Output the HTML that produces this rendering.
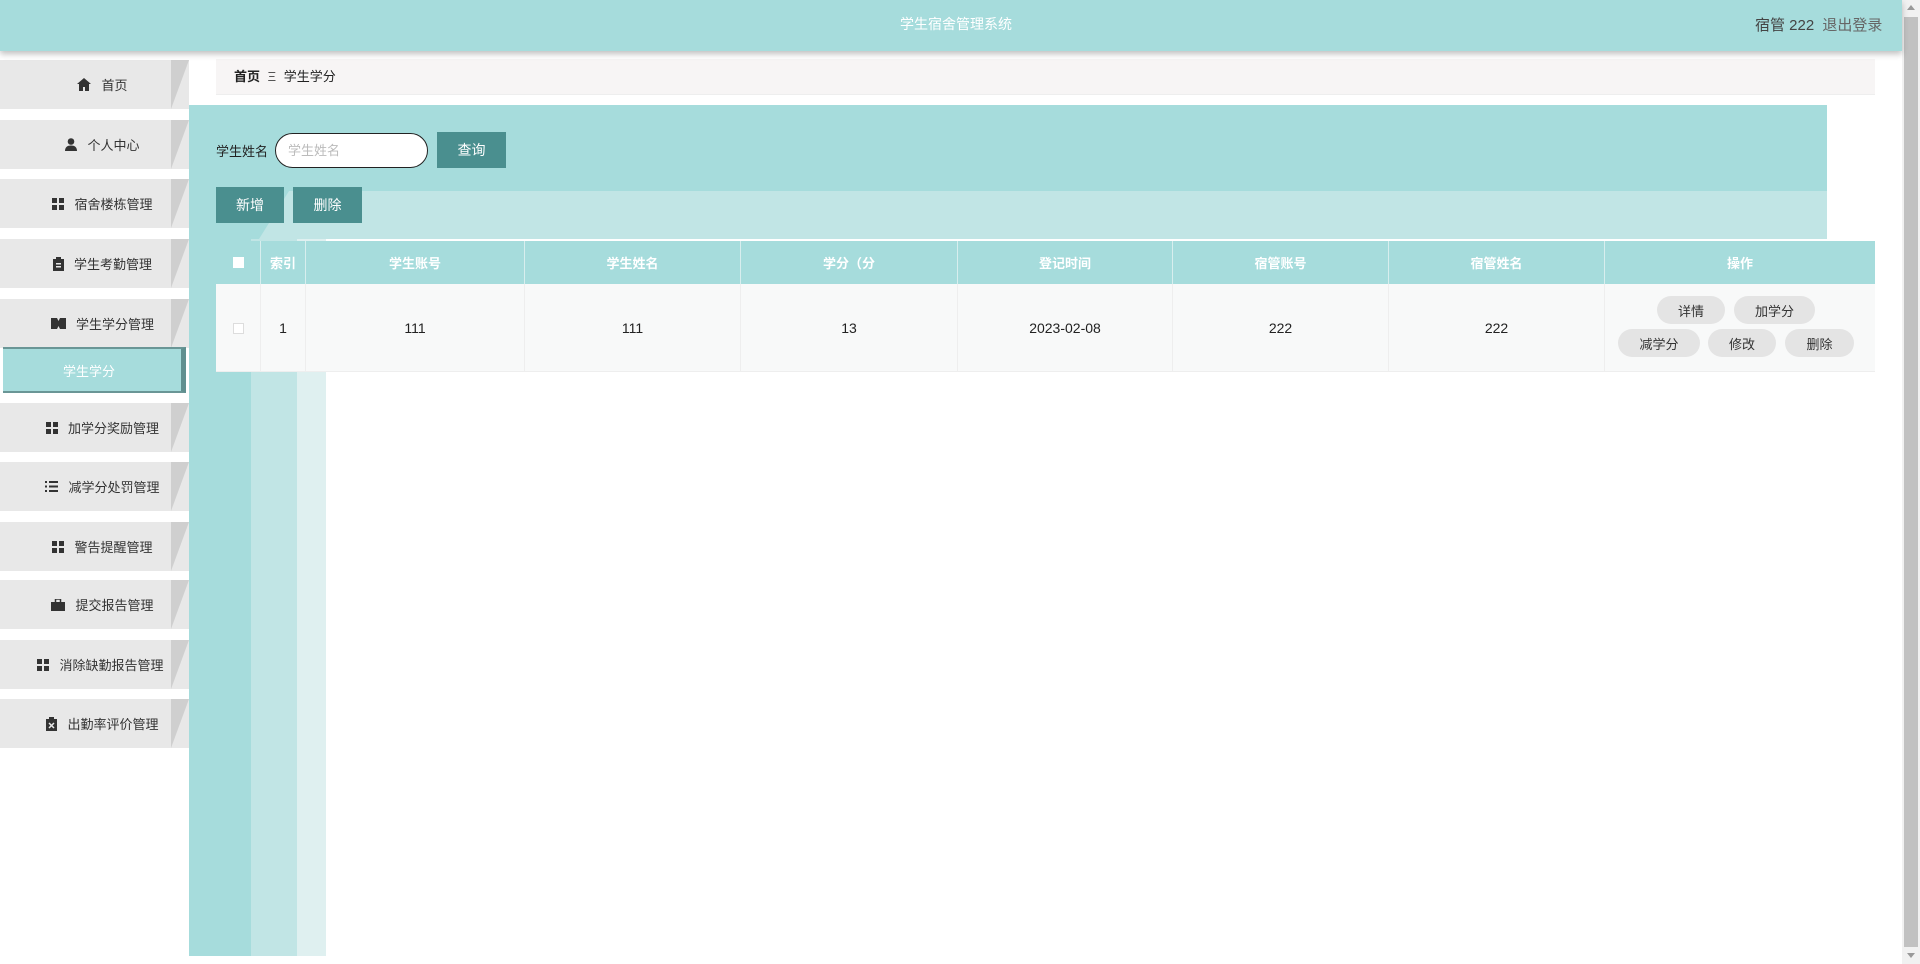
<!DOCTYPE html>
<html><head><meta charset="utf-8"><style>
*{margin:0;padding:0;box-sizing:border-box}
body{width:1920px;height:964px;overflow:hidden;background:#fff;font-family:"Liberation Sans","Noto Sans CJK SC",sans-serif;position:relative;color:#333}
.a{position:absolute}
.hd{left:0;top:0;width:1902px;height:51px;background:#a6dcdc;box-shadow:0 3px 6px rgba(0,0,0,.25);z-index:5}
.item{position:absolute;left:0;width:189px;height:49px;background:#e8e8e8;font-size:13px;color:#333;display:flex;align-items:center;justify-content:center;padding-left:16px}
.item:after{content:"";position:absolute;left:171px;top:0;width:18px;height:100%;background:#cfcfcf;clip-path:polygon(0 0,100% 0,0 100%)}
.item svg{margin-right:10px}
.th{position:absolute;top:241px;height:43px;color:#fff;font-size:13px;font-weight:bold;display:flex;align-items:center;justify-content:center;border-right:1px solid #d8eeee}
.td{position:absolute;top:284px;height:88px;font-size:14px;color:#222;display:flex;align-items:center;justify-content:center;border-right:1px solid #eee}
.pb{position:absolute;height:28px;background:#e4e4e4;border-radius:14px;font-size:13px;color:#333;display:flex;align-items:center;justify-content:center}
.btn{position:absolute;background:#4a8f8f;color:#fff;font-size:14px;display:flex;align-items:center;justify-content:center}
</style></head><body>
<div class="a hd"></div>
<div class="a" style="left:0;top:14px;width:1912px;text-align:center;font-size:14px;color:#fff;z-index:6">学生宿舍管理系统</div>
<div class="a" style="left:1755px;top:14px;font-size:15px;color:#444;z-index:6">宿管 222 <span style="color:#666;margin-left:4px">退出登录</span></div>
<!-- scrollbar -->
<div class="a" style="left:1902px;top:0;width:18px;height:964px;background:#f1f1f1"></div>
<div class="a" style="left:1904px;top:17px;width:14px;height:930px;background:#c1c1c1"></div>
<div class="a" style="left:1907px;top:5px;width:0;height:0;border-left:4px solid transparent;border-right:4px solid transparent;border-bottom:5px solid #999"></div>
<div class="a" style="left:1907px;top:953px;width:0;height:0;border-left:4px solid transparent;border-right:4px solid transparent;border-top:5px solid #999"></div>

<!-- sidebar -->
<div class="item" style="top:60px"><svg width="14" height="13" viewBox="0 0 14 13"><path d="M7 0L0 6h2v7h4V9h2v4h4V6h2z" fill="#333"/></svg>首页</div>
<div class="item" style="top:120px"><svg width="12" height="13" viewBox="0 0 12 13"><circle cx="6" cy="3.5" r="3.3" fill="#333"/><path d="M0 13c0-4 2.5-5.5 6-5.5s6 1.5 6 5.5z" fill="#333"/></svg>个人中心</div>
<div class="item" style="top:179px"><svg width="12" height="12"><rect width="5" height="5" fill="#333"/><rect x="7" width="5" height="5" fill="#333"/><rect y="7" width="5" height="5" fill="#333"/><rect x="7" y="7" width="5" height="5" fill="#333"/></svg>宿舍楼栋管理</div>
<div class="item" style="top:239px"><svg width="11" height="14"><rect y="2" width="11" height="12" fill="#333"/><rect x="3" width="5" height="3" fill="#333"/><rect x="3" y="6" width="5" height="1.5" fill="#e8e8e8"/><rect x="3" y="9" width="5" height="1.5" fill="#e8e8e8"/></svg>学生考勤管理</div>
<div class="item" style="top:299px"><svg width="15" height="11"><path d="M0 0h6l1.5 3L9 0h6v11H9l-1.5-3L6 11H0z" fill="#333"/></svg>学生学分管理</div>
<div class="a" style="left:3px;top:347px;width:183px;height:46px;background:#a6dcdc;border-right:5px solid #5f8f8f;border-bottom:2px solid #6a9696;border-top:2px solid #6a9696;color:#fff;font-size:13px;display:flex;align-items:center;justify-content:center;padding-right:6px">学生学分</div>
<div class="item" style="top:403px"><svg width="12" height="12"><rect width="5" height="5" fill="#333"/><rect x="7" width="5" height="5" fill="#333"/><rect y="7" width="5" height="5" fill="#333"/><rect x="7" y="7" width="5" height="5" fill="#333"/></svg>加学分奖励管理</div>
<div class="item" style="top:462px"><svg width="13" height="11"><rect width="2" height="2" fill="#333"/><rect x="4" width="9" height="2" fill="#333"/><rect y="4.5" width="2" height="2" fill="#333"/><rect x="4" y="4.5" width="9" height="2" fill="#333"/><rect y="9" width="2" height="2" fill="#333"/><rect x="4" y="9" width="9" height="2" fill="#333"/></svg>减学分处罚管理</div>
<div class="item" style="top:522px"><svg width="12" height="12"><rect width="5" height="5" fill="#333"/><rect x="7" width="5" height="5" fill="#333"/><rect y="7" width="5" height="5" fill="#333"/><rect x="7" y="7" width="5" height="5" fill="#333"/></svg>警告提醒管理</div>
<div class="item" style="top:580px"><svg width="14" height="12"><rect y="3" width="14" height="9" fill="#333"/><rect x="4.5" y="0" width="5" height="4" fill="none" stroke="#333" stroke-width="1.5"/></svg>提交报告管理</div>
<div class="item" style="top:640px;padding-left:12px"><svg width="12" height="12"><rect width="5" height="5" fill="#333"/><rect x="7" width="5" height="5" fill="#333"/><rect y="7" width="5" height="5" fill="#333"/><rect x="7" y="7" width="5" height="5" fill="#333"/></svg>消除缺勤报告管理</div>
<div class="item" style="top:699px"><svg width="11" height="14"><rect y="2" width="11" height="12" fill="#333"/><rect x="3" width="5" height="3" fill="#333"/><path d="M3 6l5 5M8 6l-5 5" stroke="#e8e8e8" stroke-width="1.5"/></svg>出勤率评价管理</div>

<!-- main backgrounds -->
<div class="a" style="left:189px;top:105px;width:1638px;height:86px;background:#a6dcdc"></div>
<div class="a" style="left:189px;top:191px;width:1638px;height:48px;background:#c1e5e5"></div>
<div class="a" style="left:189px;top:191px;width:100px;height:48px;background:#a6dcdc;clip-path:polygon(0 0,100% 0,70% 100%,0 100%)"></div>
<div class="a" style="left:189px;top:239px;width:62px;height:717px;background:#a6dcdc"></div>
<div class="a" style="left:251px;top:239px;width:46px;height:717px;background:#c1e5e5"></div>
<div class="a" style="left:297px;top:239px;width:29px;height:717px;background:#dff0f0"></div>

<!-- breadcrumb -->
<div class="a" style="left:216px;top:59px;width:1659px;height:36px;background:#f7f5f5;border-bottom:1px solid #eee;font-size:13px;line-height:36px;padding-left:18px;color:#222"><b>首页</b> <span style="margin:0 4px;color:#555">Ξ</span> 学生学分</div>

<!-- search -->
<div class="a" style="left:216px;top:141px;font-size:13px;color:#222">学生姓名</div>
<div class="a" style="left:275px;top:133px;width:153px;height:35px;background:#fff;border:1px solid #222;border-radius:18px;font-size:13px;color:#bbb;line-height:33px;padding-left:12px">学生姓名</div>
<div class="btn" style="left:437px;top:132px;width:69px;height:36px">查询</div>
<div class="btn" style="left:216px;top:187px;width:68px;height:36px">新增</div>
<div class="btn" style="left:293px;top:187px;width:69px;height:36px">删除</div>

<!-- table -->
<div class="a" style="left:216px;top:241px;width:1659px;height:43px;background:#a6dcdc"></div>
<div class="a" style="left:216px;top:284px;width:1659px;height:88px;background:#f8f9f9;border-bottom:1px solid #eee"></div>
<div class="th" style="left:216px;width:45px"><div style="width:11px;height:11px;background:#fff"></div></div>
<div class="th" style="left:261px;width:45px">索引</div>
<div class="th" style="left:306px;width:219px">学生账号</div>
<div class="th" style="left:525px;width:216px">学生姓名</div>
<div class="th" style="left:741px;width:217px">学分（分</div>
<div class="th" style="left:958px;width:215px">登记时间</div>
<div class="th" style="left:1173px;width:216px">宿管账号</div>
<div class="th" style="left:1389px;width:216px">宿管姓名</div>
<div class="th" style="left:1605px;width:270px;border:0">操作</div>
<div class="td" style="left:216px;width:45px"><div style="width:11px;height:11px;background:#fff;border:1px solid #ddd"></div></div>
<div class="td" style="left:261px;width:45px">1</div>
<div class="td" style="left:306px;width:219px">111</div>
<div class="td" style="left:525px;width:216px">111</div>
<div class="td" style="left:741px;width:217px">13</div>
<div class="td" style="left:958px;width:215px">2023-02-08</div>
<div class="td" style="left:1173px;width:216px">222</div>
<div class="td" style="left:1389px;width:216px">222</div>
<div class="pb" style="left:1657px;top:296px;width:68px">详情</div>
<div class="pb" style="left:1734px;top:296px;width:81px">加学分</div>
<div class="pb" style="left:1618px;top:329px;width:82px">减学分</div>
<div class="pb" style="left:1708px;top:329px;width:68px">修改</div>
<div class="pb" style="left:1785px;top:329px;width:69px">删除</div>
</body></html>
